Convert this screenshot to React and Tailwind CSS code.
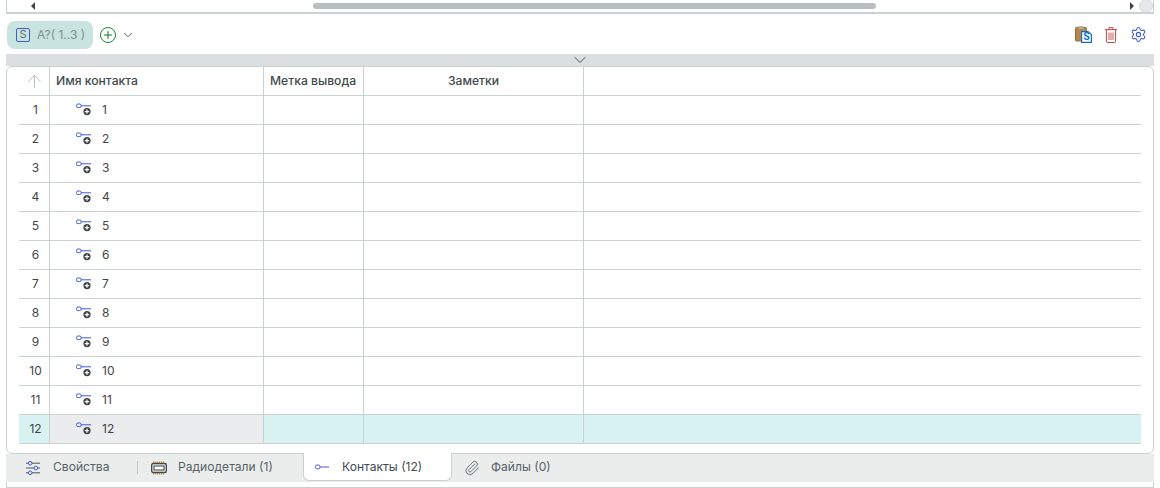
import React from "react";
import { ArrowUp, ChevronDown, Plus, Settings, Paperclip } from "lucide-react";

const rows = [1, 2, 3, 4, 5, 6, 7, 8, 9, 10, 11, 12];

const PinIcon = () => (
  <svg width="16" height="14" viewBox="0 0 16 14" fill="none" className="shrink-0">
    <rect x="0.5" y="1" width="4.6" height="3.6" rx="1.4" stroke="#3f5bd0" strokeWidth="1" />
    <path d="M5 2.8H15" stroke="#3f5bd0" strokeWidth="1" />
    <circle cx="11" cy="8.6" r="3.6" fill="#3a4242" />
    <path d="M8.8 8.6h4.4M11 6.4v4.4" stroke="#fff" strokeWidth="1.2" />
  </svg>
);

const ChipIcon = () => (
  <svg width="16" height="14" viewBox="0 0 16 14" fill="none" className="shrink-0">
    <rect x="0.7" y="2.5" width="14.6" height="9" rx="1.6" stroke="#3a4242" strokeWidth="1.3" />
    <rect x="3" y="5" width="10" height="4" fill="#fff" stroke="#3a4242" strokeWidth="1" />
    <path d="M2.5 0.5v1.8M4.5 0.5v1.8M6.5 0.5v1.8M8.5 0.5v1.8M10.5 0.5v1.8M12.5 0.5v1.8M2.5 11.7v1.8M4.5 11.7v1.8M6.5 11.7v1.8M8.5 11.7v1.8M10.5 11.7v1.8M12.5 11.7v1.8" stroke="#a67c2d" strokeWidth="0.9" />
  </svg>
);

const SlidersIcon = () => (
  <svg width="14" height="14" viewBox="0 0 14 14" fill="none" className="shrink-0">
    <path d="M0 2.2h14M0 7h14M0 11.8h14" stroke="#3a4242" strokeWidth="0.9" />
    <circle cx="4.2" cy="2.2" r="1.8" fill="#ebeded" stroke="#3f5bd0" />
    <circle cx="9.8" cy="7" r="1.8" fill="#ebeded" stroke="#3f5bd0" />
    <circle cx="4.2" cy="11.8" r="1.8" fill="#ebeded" stroke="#3f5bd0" />
  </svg>
);

const ClipboardIcon = () => (
  <svg width="17" height="17" viewBox="0 0 17 17" fill="none">
    <rect x="0.5" y="1.5" width="11" height="13.5" rx="1" fill="#b98648" stroke="#8f6a3c" />
    <rect x="3.5" y="0" width="5" height="3" fill="#a9b0b3" />
    <path d="M6.6 5.6h6.4l3.4 3v7.8h-9.8z" fill="#fff" stroke="#0b6fc9" strokeWidth="1.2" />
    <text x="11.6" y="14.2" textAnchor="middle" fontSize="10" fontWeight="700" fill="#0b6fc9" fontFamily="Inter, sans-serif">S</text>
  </svg>
);

const TrashIcon = () => (
  <svg width="12" height="16" viewBox="0 0 12 16" fill="none" className="shrink-0">
    <path d="M0 2.7h12M4 2.5V0.7h4v1.8" stroke="#b8302f" strokeWidth="0.9" />
    <path d="M1.4 3v11.2a1.3 1.3 0 0 0 1.3 1.3h6.6a1.3 1.3 0 0 0 1.3-1.3V3" stroke="#b8302f" strokeWidth="0.9" />
    <path d="M4 5.5v7.5M6 5.5v7.5M8 5.5v7.5" stroke="#b8302f" strokeWidth="0.8" />
  </svg>
);

const HeaderCell = ({ className = "", children }) => (
  <div className={`h-full flex items-center text-[12.15px] font-medium text-[#3f4a4a] ${className}`}>{children}</div>
);

const Row = ({ n, selected }) => (
  <div className={`h-[29px] flex border-b border-[#c9d1d1] text-[12px] text-[#3f4648] ${selected ? "bg-[#d7f2f1]" : ""}`}>
    <div className="w-[31px] border-r border-[#c9d1d1] flex items-center justify-center pl-[3px]">{n}</div>
    <div className={`w-[214px] border-r border-[#c9d1d1] flex items-center pl-[26px] gap-[10px] ${selected ? "bg-[#ebeced]" : ""}`}>
      <PinIcon />
      <span>{n}</span>
    </div>
    <div className="w-[100px] border-r border-[#c9d1d1]" />
    <div className="w-[220px] border-r border-[#c9d1d1]" />
    <div className="flex-1" />
  </div>
);

export default function App() {
  return (
    <div className="w-[1160px] h-[488px] bg-white flex flex-col font-['Inter',sans-serif] overflow-hidden">
      {/* scrollbar */}
      <div className="mx-[6px] h-[14px] border-x border-b-2 border-[#c9d1d1] flex items-center shrink-0">
        <span className="ml-[24px] w-0 h-0 border-y-[4px] border-y-transparent border-r-[4px] border-r-[#3f4646]" />
        <div className="ml-[278px] w-[564px] h-[6px] rounded-full bg-[#b9c0c0]" />
        <span className="ml-[254px] w-0 h-0 border-y-[4px] border-y-transparent border-l-[4px] border-l-[#3f4646]" />
        <div className="ml-[5px] w-[14px] h-[14px] rounded-full bg-[#e6e9e9] border border-[#d3d9d9]" />
      </div>

      {/* toolbar */}
      <div className="h-[40px] flex items-center pl-[7px] pr-[13px] pt-[1px] shrink-0">
        <div className="w-[86px] h-[28px] rounded-[8px] bg-[#c9e3e1] flex items-center pl-[9px] gap-[7px]">
          <span className="w-[14px] h-[14px] border border-[#3f5bd0] rounded-[2px] flex items-center justify-center text-[11px] text-[#5b6a6a]">S</span>
          <span className="text-[12px] text-[#7f8e8e] whitespace-nowrap">A?( 1..3 )</span>
        </div>
        <div className="ml-[7px] w-[16px] h-[16px] rounded-full border-[1.5px] border-[#138a2c] flex items-center justify-center">
          <Plus size={12} strokeWidth={2} color="#0f6e24" />
        </div>
        <ChevronDown size={14} strokeWidth={1.6} color="#4b5555" className="ml-[5px]" />
        <div className="ml-auto flex items-center">
          <ClipboardIcon />
          <div className="ml-[13px]"><TrashIcon /></div>
          <Settings size={17} strokeWidth={1.5} color="#3f5bd0" className="ml-[13px]" />
        </div>
      </div>

      {/* collapse bar */}
      <div className="mx-[6px] h-[12px] bg-[#dcdfdf] flex items-center justify-center shrink-0">
        <ChevronDown size={20} strokeWidth={1.1} color="#3a4242" className="shrink-0" />
      </div>

      {/* table panel */}
      <div className="mx-[6px] h-[388px] border border-[#c9d1d1] rounded-[6px] pl-[12px] pr-[12px] shrink-0">
        <div className="h-[29px] flex border-b border-[#c9d1d1]">
          <HeaderCell className="w-[31px] border-r border-[#c9d1d1] justify-center pl-[1px]">
            <ArrowUp size={21} strokeWidth={1.1} color="#b4bcbc" />
          </HeaderCell>
          <HeaderCell className="w-[214px] border-r border-[#c9d1d1] pl-[6px]">Имя контакта</HeaderCell>
          <HeaderCell className="w-[100px] border-r border-[#c9d1d1] pl-[6px] whitespace-nowrap">Метка вывода</HeaderCell>
          <HeaderCell className="w-[220px] border-r border-[#c9d1d1] justify-center">Заметки</HeaderCell>
          <HeaderCell className="flex-1" />
        </div>
        {rows.map((n) => (
          <Row key={n} n={n} selected={n === 12} />
        ))}
      </div>

      {/* tabs */}
      <div className="mx-[6px] h-[28px] bg-[#ebeded] flex text-[12.1px] text-[#566366] shrink-0">
        <div className="w-[132px] flex items-center pl-[20px] pb-[1px] relative">
          <SlidersIcon />
          <span className="ml-[13px]">Свойства</span>
          <span className="absolute right-0 top-[7px] h-[13px] w-px bg-[#c3caca]" />
        </div>
        <div className="w-[165px] flex items-center pl-[13px] pb-[1px]">
          <ChipIcon />
          <span className="ml-[11px] whitespace-nowrap">Радиодетали (1)</span>
        </div>
        <div className="w-[149px] h-[28px] -mt-px pt-[1px] bg-white rounded-b-[6px] border border-t-0 border-[#c9d1d1] flex items-center pl-[11px] text-[#3f4a55]">
          <svg width="14" height="6" viewBox="0 0 14 6" fill="none" className="shrink-0">
            <rect x="0.5" y="1" width="4.4" height="3.8" rx="1.4" stroke="#3f5bd0" />
            <path d="M5 3H14" stroke="#3f5bd0" />
          </svg>
          <span className="ml-[13px] whitespace-nowrap">Контакты (12)</span>
        </div>
        <div className="flex items-center pl-[12px] pb-[1px]">
          <Paperclip size={16} strokeWidth={1.3} color="#566366" />
          <span className="ml-[11px] whitespace-nowrap">Файлы (0)</span>
        </div>
      </div>

      <div className="mx-[6px] flex-1 border-x border-b border-[#c9d1d1]" />
    </div>
  );
}
